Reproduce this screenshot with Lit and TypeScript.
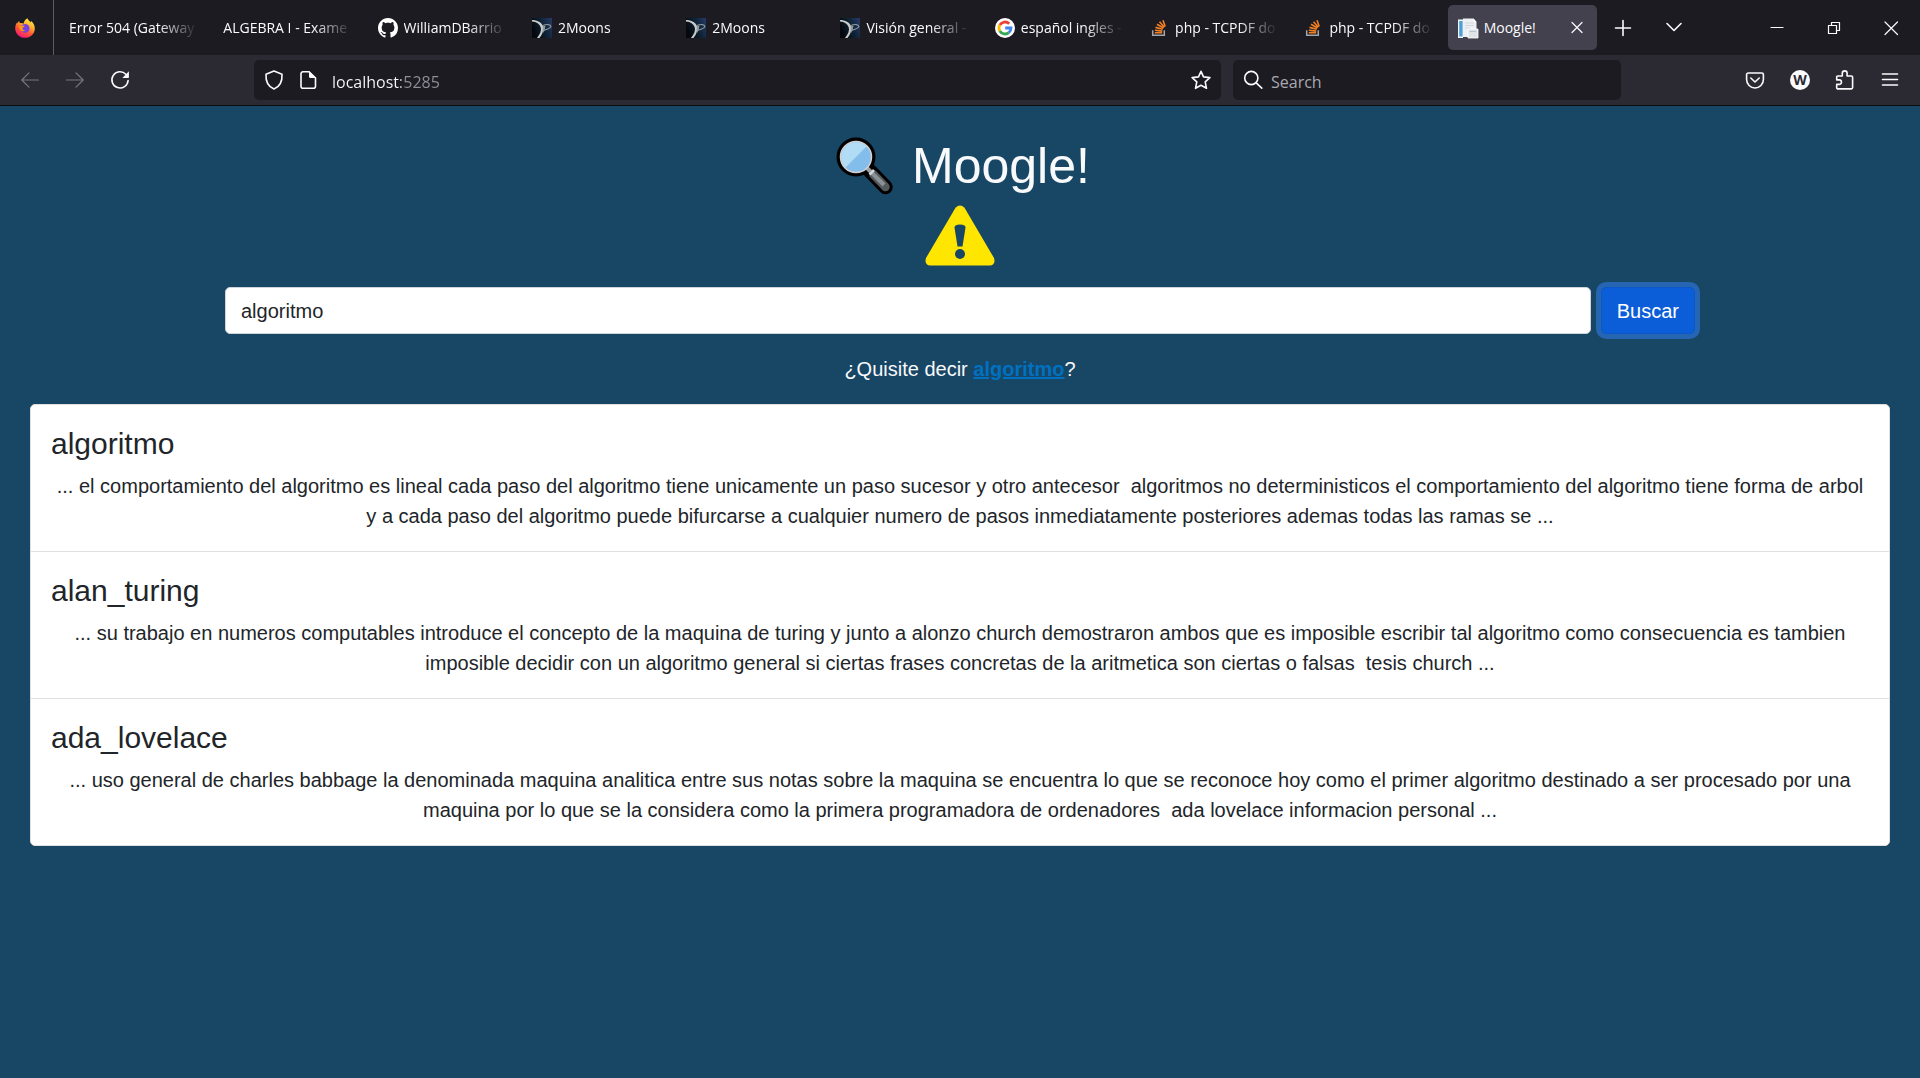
import { LitElement, html, svg, css, nothing } from "lit";
import { customElement, property } from "lit/decorators.js";
import { classMap } from "lit/directives/class-map.js";

type Tab = { title: string; icon?: string; active?: boolean };

const TABS: Tab[] = [
  { title: "Error 504 (Gateway" },
  { title: "ALGEBRA I - Exame" },
  { title: "WilliamDBarrio", icon: "github" },
  { title: "2Moons", icon: "moons" },
  { title: "2Moons", icon: "moons" },
  { title: "Visión general -", icon: "moons" },
  { title: "español ingles -", icon: "google" },
  { title: "php - TCPDF do", icon: "stack" },
  { title: "php - TCPDF do", icon: "stack" },
  { title: "Moogle!", icon: "page", active: true },
];

const RESULTS = [
  {
    title: "algoritmo",
    snippet:
      "... el comportamiento del algoritmo es lineal cada paso del algoritmo tiene unicamente un paso sucesor y otro antecesor  algoritmos no deterministicos el comportamiento del algoritmo tiene forma de arbol y a cada paso del algoritmo puede bifurcarse a cualquier numero de pasos inmediatamente posteriores ademas todas las ramas se ...",
  },
  {
    title: "alan_turing",
    snippet:
      "... su trabajo en numeros computables introduce el concepto de la maquina de turing y junto a alonzo church demostraron ambos que es imposible escribir tal algoritmo como consecuencia es tambien imposible decidir con un algoritmo general si ciertas frases concretas de la aritmetica son ciertas o falsas  tesis church ...",
  },
  {
    title: "ada_lovelace",
    snippet:
      "... uso general de charles babbage la denominada maquina analitica entre sus notas sobre la maquina se encuentra lo que se reconoce hoy como el primer algoritmo destinado a ser procesado por una maquina por lo que se la considera como la primera programadora de ordenadores  ada lovelace informacion personal ...",
  },
];

/* Every drawing uses a 20 x 20 grid. */
const ICONS: Record<string, unknown> = {
  firefox: svg`
    <defs>
      <linearGradient id="flame" x1="0.8" y1="0" x2="0.3" y2="1">
        <stop offset="0" stop-color="#fff44f"/><stop offset="0.35" stop-color="#ffb22e"/>
        <stop offset="0.65" stop-color="#ff5634"/><stop offset="1" stop-color="#f2127c"/>
      </linearGradient>
    </defs>
    <path fill="url(#flame)" d="M12.4 0.2C13 2.2 15 3.2 16 4.4C16.300 3.900 16.200 3.200 16.100 2.800C18.400 4.800 19.800 7.600 19.800 10.400C19.800 15.800 15.400 19.800 10 19.800C4.600 19.800 0.200 15.800 0.200 10.200C0.200 7.600 1.200 5.400 2 4.400L2.200 5.600C2.800 4.400 3.400 3.600 4.200 3C4.200 4 4.500 4.700 5 5.200C6.200 4.900 7.600 5 8.600 5.700C8.900 3.400 10.300 1.200 12.400 0.200Z"/>
    <circle cx="10.200" cy="10.400" r="4.300" fill="#7542e5"/>
    <path fill="#ff980e" d="M3.600 8.600C5.400 7.200 8 8 9.600 7.600C9.600 8.900 8 9.300 7.600 10C7.200 11.200 8.400 12.600 10.200 12C9 14.200 5.400 13.600 4.600 10.600Z"/>`,
  github: svg`
    <path fill="#fff" transform="scale(1.25)" d="M8 0C3.580 0 0 3.580 0 8c0 3.540 2.290 6.530 5.470 7.590.4.070.55-.17.55-.38 0-.19-.01-.82-.01-1.490-2.010.37-2.530-.49-2.690-.94-.09-.23-.48-.94-.82-1.130-.28-.15-.68-.52-.01-.53.63-.01 1.080.58 1.230.82.72 1.210 1.870.87 2.330.66.07-.52.28-.87.51-1.070-1.780-.2-3.640-.89-3.640-3.950 0-.87.31-1.590.82-2.150-.08-.2-.36-1.020.08-2.120 0 0 .67-.21 2.200.82.64-.18 1.320-.27 2-.27s1.360.09 2 .27c1.530-1.040 2.200-.82 2.200-.82.44 1.100.16 1.920.08 2.120.51.56.82 1.270.82 2.150 0 3.070-1.870 3.750-3.650 3.950.29.25.54.73.54 1.480 0 1.070-.01 1.930-.01 2.200 0 .21.15.46.55.38A8.010 8.010 0 0 0 16 8c0-4.420-3.580-8-8-8z"/>`,
  moons: svg`
    <defs>
      <linearGradient id="night" x1="0" y1="0.4" x2="1" y2="0">
        <stop offset="0" stop-color="#05090f"/><stop offset="0.5" stop-color="#0e2436"/><stop offset="1" stop-color="#283a6a"/>
      </linearGradient>
    </defs>
    <rect width="20" height="20" fill="url(#night)"/>
    <path d="M0 2C5.500 2 9.500 4.500 11 8C12 11.500 10.800 16 7.500 20H5C8.200 16 9.600 12.500 8.800 9.500C7.500 5.800 4.500 3.900 0 3.600Z" fill="#c9cbca"/>
    <path d="M10.800 8.200L13.500 7.600L12.600 12.600L10.600 15.500Z" fill="#8f9a9c"/>
    <path d="M11 7.400C14.500 5.800 18.600 6.600 18.900 8.300C19 9.800 15.500 11.300 12 12.300" fill="none" stroke="#8a979b" stroke-width="1.100"/>`,
  google: svg`
    <circle cx="10" cy="10" r="10" fill="#fff"/>
    <g fill="none" stroke-width="2.800">
      <path stroke="#ea4335" d="M14.200 5.700A6 6 0 0 0 4.800 7"/>
      <path stroke="#fbbc05" d="M4.800 7A6 6 0 0 0 4.800 13"/>
      <path stroke="#34a853" d="M4.800 13A6 6 0 0 0 13.800 14.600"/>
      <path stroke="#4285f4" d="M13.800 14.600A6 6 0 0 0 16 10H10.200"/>
    </g>`,
  stack: svg`
    <path d="M3.700 12.200V17.200H15.300V12.200" fill="none" stroke="#a3a7ab" stroke-width="1.500"/>
    <g stroke="#f48024" stroke-width="1.600">
      <path d="M5.800 14.800H13.200M5.900 12.300L13.300 13.100M6.500 9.400L13.700 11.200M8 6.300L14.500 10M10.500 3.800L15.400 9.300M14 2.300L16.200 8.600"/>
    </g>`,
  page: svg`
    <path d="M0 1.500H5V20H0Z" fill="#f3f6f8"/><path d="M1.200 3H4.600V18.500H1.200Z" fill="#4f9fd6"/>
    <path d="M5 0.500H15.500L18.500 4V19H5Z" fill="#eef1f4"/><path d="M15.500 0.500V4H18.500Z" fill="#fff"/>
    <path d="M7 5H16M7 7.500H16M7 10H12" stroke="#cfd7df" stroke-width="1"/>
    <path d="M10 11H20V20H10Z" fill="#dfe4e8" stroke="#fff" stroke-width="0.800"/>
    <path d="M11.500 13.500H18" stroke="#b9c3cb" stroke-width="1"/>`,
  back: svg`<path class="line" d="M18.500 10H2M9 2.800L1.800 10L9 17.200"/>`,
  forward: svg`<path class="line" d="M1.500 10H18M11 2.800L18.200 10L11 17.200"/>`,
  reload: svg`
    <path class="line heavy" d="M15.800 4.200A8.100 8.100 0 1 0 18.100 10.500"/>
    <path fill="currentColor" d="M18.900 1.300V7.200A0.700 0.700 0 0 1 18.200 7.900H12.400Z"/>`,
  shield: svg`<path class="line heavy" d="M10 1L18 4.200C18.400 11 16 16.500 10 19C4 16.500 1.600 11 2 4.200Z"/>`,
  doc: svg`
    <path class="line heavy" d="M11 1.800H5A2 2 0 0 0 3 3.800V16.200A2 2 0 0 0 5 18.200H15.500A2 2 0 0 0 17.500 16.200V8Z"/>
    <path fill="currentColor" d="M11 1V6.500A1.500 1.500 0 0 0 12.500 8H18.300Z"/>`,
  star: svg`<path class="line heavy" d="M10 1.300L12.500 6.900L18.900 7.600L14.200 11.900L15.500 18.300L10 15.200L4.500 18.300L5.800 11.900L1.100 7.600L7.500 6.900Z"/>`,
  search: svg`<circle class="line heavy" cx="8.300" cy="8" r="6.600"/><path class="line heavy" d="M13.200 12.900L18.800 18.200"/>`,
  pocket: svg`
    <path class="line heavy" d="M3.200 3H16.800A1.600 1.600 0 0 1 18.400 4.600V9.600A8.400 8.400 0 0 1 1.600 9.600V4.600A1.600 1.600 0 0 1 3.200 3Z"/>
    <path class="line heavy" d="M5.800 8L10 12L14.200 8"/>`,
  puzzle: svg`
    <path class="line heavy" d="M2.500 18.900A1 1 0 0 1 1.700 18V14.400H4.200A2.200 2.200 0 0 0 4.200 9.900H1.700V7A1 1 0 0 1 2.700 6H7.300V3.300A2.400 2.400 0 0 1 12.100 3.300V6H16.300A1.300 1.300 0 0 1 17.600 7.300V17.600A1.300 1.300 0 0 1 16.300 18.900Z"/>`,
  menu: svg`<path class="line heavy" d="M2.500 4H17.500M2.500 9.500H17.500M2.500 15H17.500"/>`,
  close: svg`<path class="line" d="M5 4.500L15 14.500M15 4.500L5 14.500"/>`,
  plus: svg`<path class="line heavy" d="M10 2.500V17.500M2.500 10H17.500"/>`,
  chevron: svg`<path class="line heavy" d="M3 5.500L10 12.500L17 5.500"/>`,
  minimize: svg`<path class="line" d="M4 9.500H16"/>`,
  restore: svg`<path class="line" d="M4.500 7.500H12.500V15.500H4.500ZM7.500 7.500V4.500H15.500V12.500H12.500"/>`,
  exit: svg`<path class="line" d="M4 4L16.500 16.500M16.500 4L4 16.500"/>`,
};

@customElement("ui-icon")
class UiIcon extends LitElement {
  @property() name = "";

  static styles = css`
    :host { display: block; flex: none; width: 20px; height: 20px; }
    .glyph { display: block; width: 100%; height: 100%; overflow: visible; }
    .line { fill: none; stroke: currentColor; stroke-width: 1.2; stroke-linejoin: round; stroke-linecap: round; }
    .heavy { stroke-width: 1.6; }
  `;

  render() {
    return html`<svg class="glyph" viewBox="0 0 20 20" aria-hidden="true">${ICONS[this.name]}</svg>`;
  }
}

@customElement("browser-chrome")
class BrowserChrome extends LitElement {
  static styles = css`
    :host {
      display: block;
      background: #2b2a33;
      color: #fbfbfe;
      border-bottom: 1px solid #0c0c0d;
      font-family: "Open Sans", "Noto Sans", sans-serif;
    }
    button { border: 0; padding: 0; background: none; color: inherit; font: inherit; }
    .strip { display: flex; align-items: center; height: 55px; background: #1c1b22; }
    .pinned { display: flex; align-items: center; align-self: stretch; width: 54px; padding-left: 15px; border-right: 1px solid #5b5b66; box-sizing: border-box; margin-right: 5px; }
    .tabs { display: flex; flex: 1; min-width: 0; gap: 5px; }
    .tab { display: flex; align-items: center; flex: 1 1 0; min-width: 0; height: 45px; padding: 0 10px; box-sizing: border-box; border-radius: 5px; }
    .tab.active { background: #42414d; }
    .pick { display: flex; align-items: center; flex: 1; min-width: 0; gap: 6px; text-align: left; }
    .label {
      flex: 1;
      min-width: 0;
      white-space: nowrap;
      font-size: 14px;
      line-height: 20px;
      -webkit-mask-image: linear-gradient(to left, transparent, #000 40px);
      mask-image: linear-gradient(to left, transparent, #000 40px);
    }
    .active .label { -webkit-mask-image: none; mask-image: none; }
    .extras { display: flex; gap: 31px; padding: 0 78px 0 16px; }
    .window { display: flex; gap: 37px; padding: 0 19px 0 5px; }
    .bar { display: flex; align-items: center; height: 50px; }
    .nav { display: flex; gap: 25px; padding-left: 20px; width: 254px; box-sizing: border-box; }
    .off { color: #77767e; }
    .field { display: flex; align-items: center; height: 40px; box-sizing: border-box; background: #1c1b22; border-radius: 5px; }
    .address { flex: 947 1 0; gap: 14px; padding: 0 10px; margin-right: 12px; }
    .find { flex: 368 1 0; gap: 8px; padding: 0 10px; }
    .entry { flex: 1; min-width: 0; border: 0; padding: 3px 0 0; outline: 0; background: none; color: #fbfbfe; font: inherit; font-size: 16px; line-height: 24px; }
    .entry::placeholder { color: #a9a9b1; opacity: 1; }
    .host {
      background: linear-gradient(to right, #fbfbfe 69px, #8f8f98 69px);
      -webkit-background-clip: text;
      background-clip: text;
      -webkit-text-fill-color: transparent;
    }
    .tools { display: flex; gap: 25px; padding: 0 20px 0 124px; }
    .account { width: 20px; height: 20px; border-radius: 50%; background: #fbfbfe; color: #2b2a33; font-size: 14px; line-height: 20px; font-weight: 700; text-align: center; }
  `;

  private button(icon: string, label: string, off = false) {
    return html`<button class=${classMap({ off })} aria-label=${label} ?disabled=${off}>
      <ui-icon name=${icon}></ui-icon>
    </button>`;
  }

  render() {
    return html`
      <div class="strip">
        <div class="pinned"><ui-icon name="firefox"></ui-icon></div>
        <nav class="tabs" aria-label="Tabs">
          ${TABS.map(
            (tab) => html`<div class=${classMap({ tab: true, active: !!tab.active })}>
              <button class="pick">
                ${tab.icon ? html`<ui-icon name=${tab.icon}></ui-icon>` : nothing}
                <span class="label">${tab.title}</span>
              </button>
              ${tab.active ? this.button("close", "Close tab") : nothing}
            </div>`
          )}
        </nav>
        <div class="extras">${this.button("plus", "New tab")}${this.button("chevron", "List all tabs")}</div>
        <div class="window">
          ${this.button("minimize", "Minimize")}${this.button("restore", "Restore")}${this.button("exit", "Close")}
        </div>
      </div>
      <div class="bar">
        <div class="nav">
          ${this.button("back", "Back", true)}${this.button("forward", "Forward", true)}${this.button("reload", "Reload")}
        </div>
        <div class="field address">
          <ui-icon name="shield"></ui-icon>
          <ui-icon name="doc"></ui-icon>
          <input class="entry host" aria-label="Address" value="localhost:5285" />
          ${this.button("star", "Bookmark")}
        </div>
        <div class="field find">
          <ui-icon name="search"></ui-icon>
          <input class="entry" aria-label="Search" placeholder="Search" />
        </div>
        <div class="tools">
          ${this.button("pocket", "Pocket")}
          <button class="account" aria-label="Account">W</button>
          ${this.button("puzzle", "Extensions")}${this.button("menu", "Menu")}
        </div>
      </div>
    `;
  }
}

@customElement("search-page")
class SearchPage extends LitElement {
  static styles = css`
    :host {
      display: block;
      flex: 1;
      padding: 30px 30px 0;
      background: #184665;
      color: #f8f9fa;
      font-family: "Liberation Sans", Arial, sans-serif;
      font-size: 20px;
      line-height: 30px;
      text-align: center;
    }
    .brand { display: flex; justify-content: center; align-items: center; gap: 18px; margin: 0; padding-left: 6px; font-size: 50px; line-height: 60px; font-weight: 400; }
    .lens { width: 58px; height: 58px; }
    .alert { display: block; width: 70px; height: 61px; margin: 9px auto 21px; }
    .query { display: flex; gap: 10px; max-width: 1470px; margin: 0 auto; }
    .text, .submit { box-sizing: border-box; height: 47px; border-radius: 5px; font: inherit; }
    .text { flex: 1; min-width: 0; padding: 1px 15px 0; border: 1px solid #ced4da; background: #fff; color: #212529; outline: 0; }
    .submit { padding: 0 15px; border: 1px solid #0a58ca; background: #0b5ed7; color: #fff; box-shadow: 0 0 0 5px rgba(49, 132, 253, 0.5); }
    .hint { margin: 20px 0; }
    .link { color: #0071c1; font-weight: 700; text-decoration: underline; }
    .results { list-style: none; margin: 0; padding: 0; border: 1px solid #dfdfdf; border-radius: 5px; background: #fff; color: #212529; }
    .item { padding: 21px 20px 20px; border-bottom: 1px solid #dfdfdf; }
    .item:last-child { border-bottom: 0; }
    .title { margin: 0 0 9px; font-size: 30px; line-height: 36px; font-weight: 400; text-align: left; }
    .snippet { margin: 0; white-space: pre-wrap; }
  `;

  render() {
    return html`
      <h1 class="brand">
        <svg class="lens" viewBox="0 0 58 58" aria-hidden="true">
          <circle cx="20" cy="20" r="19.500" fill="#000" />
          <path d="M34 34L49.500 50" stroke="#000" stroke-width="14.500" stroke-linecap="round" />
          <path d="M31 31L38 38" stroke="#9aa0a3" stroke-width="4" />
          <path d="M37.500 37.500L49.500 50" stroke="#54595d" stroke-width="8.500" stroke-linecap="round" />
          <path d="M35.500 35.500L48 48" stroke="#8b9296" stroke-width="4" />
          <path d="M33.500 37.500L38 33" stroke="#d3d6d8" stroke-width="2.500" />
          <circle cx="20" cy="20" r="15.500" fill="#83bdec" stroke="#d5d0d2" stroke-width="1.500" />
          <path d="M9.500 30.500A14.800 14.800 0 0 1 30.500 9.500Z" fill="#b2dcf5" />
        </svg>
        <span>Moogle!</span>
      </h1>
      <svg class="alert" viewBox="0 0 70 61" aria-hidden="true">
        <path fill="#ffe600" d="M30.500 2.800Q35 -2 39.500 2.800L69 53Q71 60 64.500 60.500H5.500Q-1 60 1 53Z" />
        <path fill="#184665" d="M29.500 22.500Q29.500 19.500 35 19.500Q40.500 19.500 40.500 22.500L37.500 41.500H32.500Z" />
        <circle cx="35" cy="49" r="5" fill="#184665" />
      </svg>
      <form class="query" @submit=${(e: Event) => e.preventDefault()}>
        <input class="text" aria-label="Buscar" value="algoritmo" />
        <button class="submit">Buscar</button>
      </form>
      <p class="hint">¿Quisite decir <a class="link" href="#algoritmo">algoritmo</a>?</p>
      <ul class="results">
        ${RESULTS.map(
          (r) => html`<li class="item">
            <h2 class="title">${r.title}</h2>
            <p class="snippet">${r.snippet}</p>
          </li>`
        )}
      </ul>
    `;
  }
}

@customElement("app-root")
class AppRoot extends LitElement {
  static styles = css`
    :host { display: flex; flex-direction: column; min-height: 100vh; }
  `;

  render() {
    return html`<browser-chrome></browser-chrome><search-page></search-page>`;
  }
}
